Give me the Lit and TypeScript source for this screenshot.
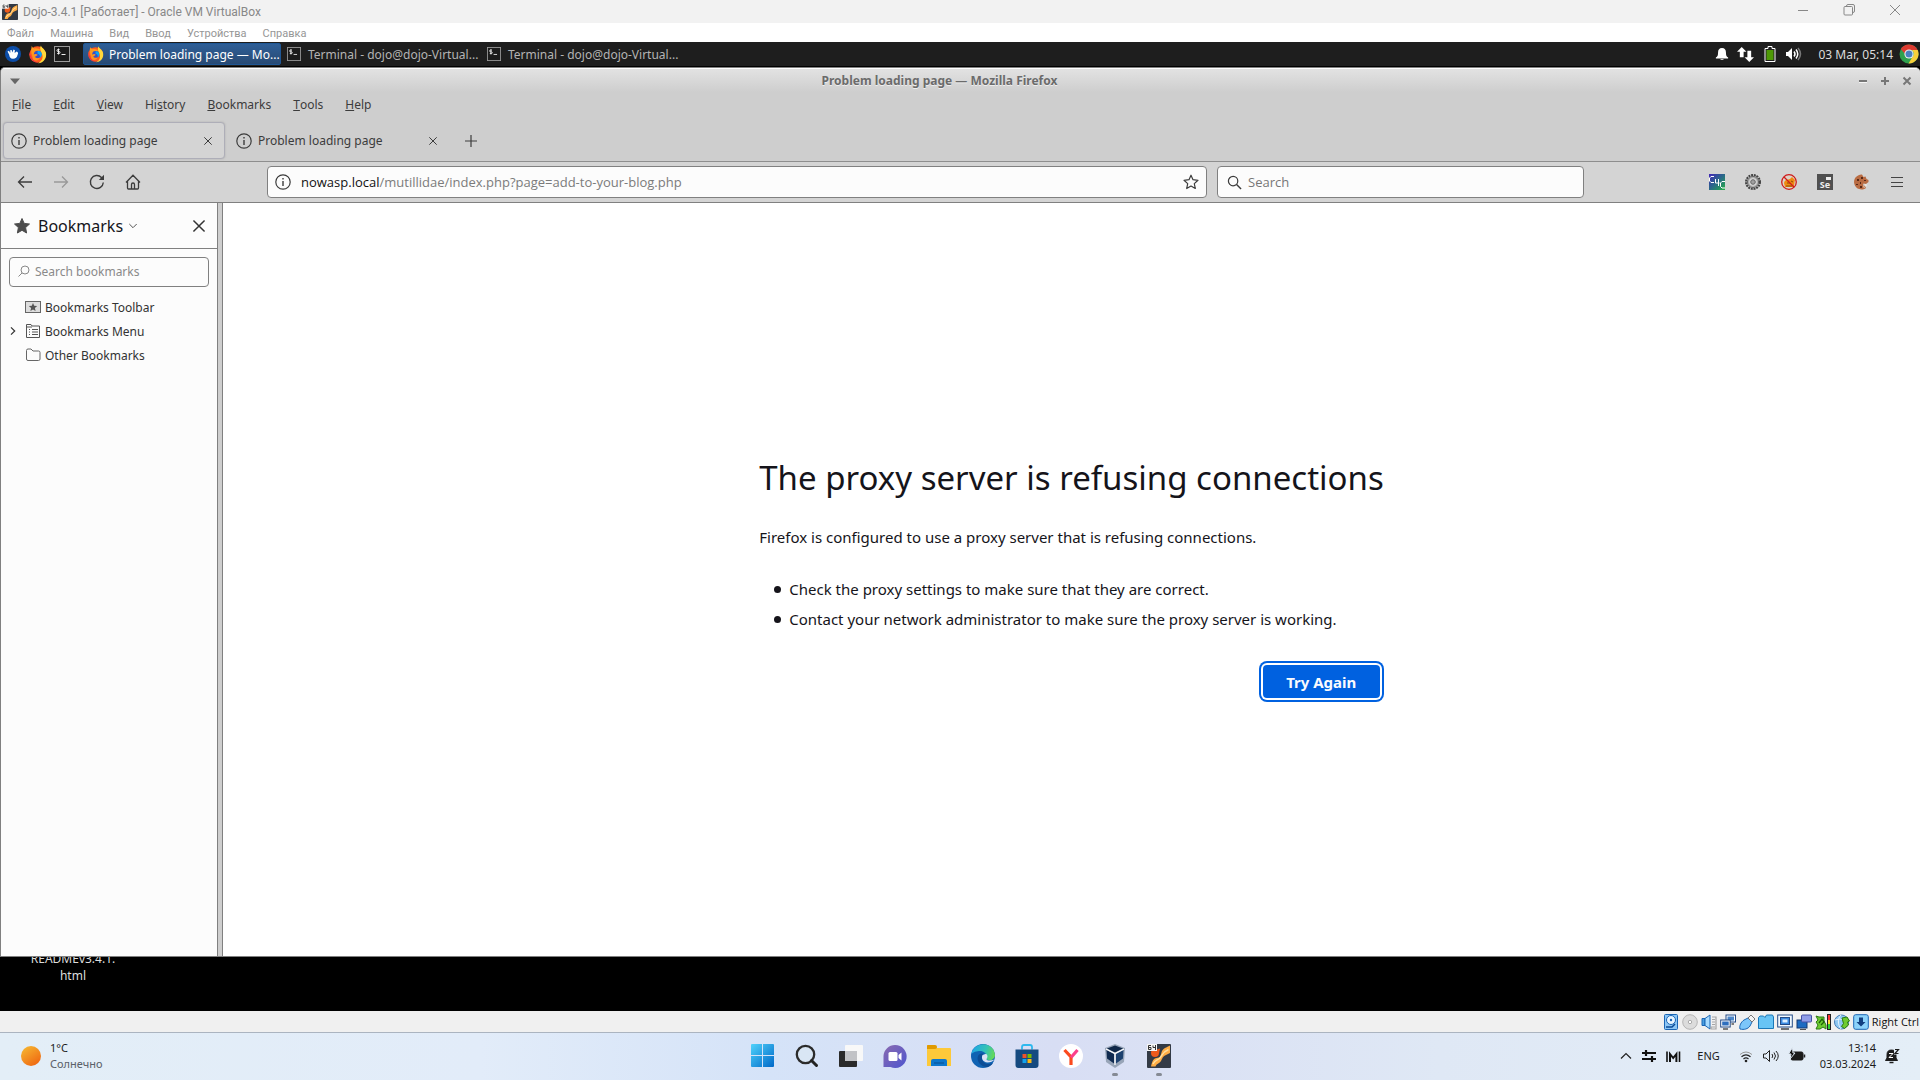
import { LitElement, html, css, svg, nothing } from "lit";
import { customElement, property, state } from "lit/decorators.js";

type Drawing = { box: number; body: unknown };

const strokeInfo = svg`<circle cx="8" cy="8" r="7.200" fill="none" stroke="currentColor" stroke-width="1.200"/><path d="M8 7v5M8 4v1.500" stroke="currentColor" stroke-width="1.400"/>`;

const foxBody = svg`
  <circle cx="12.500" cy="12.500" r="10.800" fill="#ff5a1f"/>
  <path d="M17 0.500c.5 3 5 4.500 6.500 9 1.600 7-2 14-10.500 14.500 5-2 7.500-7 5.500-12C17.500 8 14.500 6 17 .5z" fill="#ffd93b"/>
  <path d="M5 1c.5 2 1.500 3 3.500 3.600C12 4 15 5 17 7.600c-2-.6-3 0-3.600 1C10 8 8.500 9 9 11l3 1.500-4 3C5 14 3 10 5 1z" fill="#ff9a1e"/>
  <circle cx="12.700" cy="12.500" r="5" fill="#3a4fc4"/>
  <path d="M12.500 8.200c2.500-1.200 5.500.6 5.700 3.800.1 2-1 4-2.600 5 .7-3.500-.6-5-3.100-5.500z" fill="#0aa6f5"/>
  <path d="M5 12c1 1 3 .5 4.500 0 1.600-.4 2.700.4 3.300 1.100-1.600.4-2 2.400-4 2.400 1 2 4.700 2.500 7 1-1.300 4.400-6.500 5-9.200 2.500z" fill="#ff9320"/>
  <path d="M2 9c-1 8 5 14.500 12 14.500C8 22.500 3.500 18 2 9z" fill="#e6225b"/>`;

const termBody = svg`
  <rect x=".5" y=".5" width="15" height="15" fill="#1c1c1c" stroke="#9a9a9a"/>
  <path d="M5.500 3.500H4a1 1 0 0 0 0 2h1a1 1 0 0 1 0 2H3.200M4.500 2.500v6M7.500 8.500h4" fill="none" stroke="#eee"/>`;

const vmBody = svg`
  <rect width="24" height="24" rx="1" fill="#333a45"/>
  <path d="M4 22.500c1-5 2.500-8 5.500-8.500 4-.5 4-2 5-5.500C15.500 5 18 4 20 3l3-1.500V9l-4 2c-3 1-3.500 3-5 6-1.500 2.500-4 2-5.500 5.500z" fill="#ffad45"/>
  <path d="M6 20c2-4 5-4 7-6 2.500-3 2.500-6 8.500-8.500" fill="none" stroke="#ffe0a0" stroke-width="1.500"/>
  <circle cx="8" cy="9" r="4" fill="#ee5a1c"/><path d="M9 6l4-1.500-1 5z" fill="#ee5a1c"/>
  <rect x="0" y="0" width="10" height="7" fill="#f5f5f5"/>
  <path d="M4 1.500H1.500v4H4v-2H1.500M6 1.500v2h3M8.500 1v5" fill="none" stroke="#333"/>`;

const drawings: Record<string, Drawing> = {
  info: { box: 16, body: strokeInfo },
  fox: { box: 25, body: foxBody },
  term: { box: 16, body: termBody },
  vm: { box: 24, body: vmBody },
  xfce: { box: 16, body: svg`<circle cx="8" cy="8" r="8" fill="#0c4da8"/><path d="M2.500 5.500l1.500-.8 1.200 2.200L5.400 4h1.300l.5 2.600L8.600 3.600l1.300.6L9.600 7l2-1.500c1.400.4 2 2 1 3.300-.5 2.700-2 4-4.600 4-2.800 0-3.600-1.700-3.800-4z" fill="#fff"/>` },
  chrome: { box: 20, body: svg`<circle cx="10" cy="10" r="9.500" fill="#2fa04e"/><path d="M1.800 5A9.500 9.500 0 0 1 18.600 6H10a4 4 0 0 0-4 4z" fill="#dd3b31"/><path d="M18.700 6A9.500 9.500 0 0 1 9.500 19.500L14 12a4 4 0 0 0-1.500-6z" fill="#f8cf3b"/><circle cx="10" cy="10" r="4.600" fill="#f1f1f1"/><circle cx="10" cy="10" r="3.500" fill="#4a80c0"/>` },
  bell: { box: 16, body: svg`<path d="M8 1c3 0 4.500 2 4.500 5 0 3.500.5 5 2.500 6v1H1v-1c2-1 2.500-2.500 2.500-6C3.500 3 5 1 8 1zM6 14h4c-.3 1.300-3.700 1.300-4 0z" fill="#fff"/>` },
  updown: { box: 18, body: svg`<path d="M5 1l5 5H7v6H3V6H0zM13 17l5-5h-3V5h-4v7H8z" fill="#fff"/>` },
  battery: { box: 16, body: svg`<path d="M6 .5h4v2h3v13H3v-13h3z" fill="#1e1e1e" stroke="#fff"/><rect x="4.500" y="4" width="7" height="10" fill="#4e9a06"/>` },
  volume: { box: 16, body: svg`<path d="M0 6h2l4-4v12l-4-4H0z" fill="#fff"/><path d="M8 5.500q2 2.500 0 5M10 3.500q3.500 4.500 0 9" fill="none" stroke="#fff" stroke-width="1.500"/><path d="M12 2q5 6 0 12" fill="none" stroke="#777" stroke-width="1.500"/>` },
  winmin: { box: 12, body: svg`<path d="M1 6.500h10" stroke="#888"/>` },
  winres: { box: 12, body: svg`<path d="M3.500 3V2a1.500 1.500 0 0 1 1.500-1.500h5A1.500 1.500 0 0 1 11.500 2v5A1.500 1.500 0 0 1 10 8.500H9.500" fill="none" stroke="#888"/><rect x="1" y="2.500" width="8.500" height="8.500" rx="1" fill="none" stroke="#888"/>` },
  winclose: { box: 12, body: svg`<path d="M1 1l10 10M11 1L1 11" stroke="#888"/>` },
  caret: { box: 8, body: svg`<path d="M0 2h8L4 6.500z" fill="#666"/>` },
  fmin: { box: 8, body: svg`<path d="M0 4h8" stroke="#777" stroke-width="2"/><path d="M0 5.500h8" stroke="#f5f5f5"/>` },
  fmax: { box: 8, body: svg`<path d="M0 4h8M4 0v8" stroke="#777" stroke-width="2"/>` },
  fclose: { box: 8, body: svg`<path d="M.5.500l7 7M7.500.500l-7 7" stroke="#777" stroke-width="2"/>` },
  x: { box: 8, body: svg`<path d="M.3.300l7.400 7.400M7.700.300L.3 7.700" stroke="currentColor"/>` },
  plus: { box: 12, body: svg`<path d="M6 0v12M0 6h12" stroke="currentColor" stroke-width="1.200"/>` },
  back: { box: 16, body: svg`<path d="M15 8H1.500M7 2.500L1.500 8 7 13.500" fill="none" stroke="currentColor" stroke-width="1.300"/>` },
  forward: { box: 16, body: svg`<path d="M1 8h13.500M9 2.500L14.500 8 9 13.500" fill="none" stroke="currentColor" stroke-width="1.300"/>` },
  reload: { box: 16, body: svg`<path d="M14.300 8.500A6.500 6.500 0 1 1 12.500 3.500L14 5" fill="none" stroke="currentColor" stroke-width="1.400"/><path d="M15 .8V6H9.800z" fill="currentColor"/>` },
  home: { box: 16, body: svg`<path d="M1 8.500L8 1.200l7 7.300M2.500 7.500V14q0 1 1 1h9q1 0 1-1V7.500M6.500 15v-4.500a1.500 1.500 0 0 1 3 0V15" fill="none" stroke="currentColor" stroke-width="1.300"/>` },
  star: { box: 16, body: svg`<path d="M8 1.200l2 4.500 5 .6-3.700 3.300 1 4.900L8 12l-4.300 2.500 1-4.900L1 6.300l5-.6z" fill="none" stroke="currentColor" stroke-width="1.200" stroke-linejoin="round"/>` },
  starfull: { box: 16, body: svg`<path d="M8 .5l2.200 4.900 5.300.6-3.900 3.600 1 5.400L8 12.300 3.400 15l1-5.400L.5 6l5.300-.6z" fill="#4c4c4c" stroke="#4c4c4c" stroke-linejoin="round"/>` },
  search: { box: 16, body: svg`<circle cx="6.500" cy="6.500" r="5" fill="none" stroke="currentColor" stroke-width="1.300"/><path d="M10.200 10.200L15 15" stroke="currentColor" stroke-width="1.500"/>` },
  searchleft: { box: 12, body: svg`<circle cx="7" cy="5" r="4" fill="none" stroke="currentColor"/><path d="M4 8L.5 11.500" stroke="currentColor"/>` },
  chevdown: { box: 8, body: svg`<path d="M.3 2L4 5.700 7.700 2" fill="none" stroke="currentColor"/>` },
  chevright: { box: 8, body: svg`<path d="M2 .3L5.700 4 2 7.700" fill="none" stroke="currentColor" stroke-width="1.200"/>` },
  toolbarfolder: { box: 16, body: svg`<rect x=".5" y="2.500" width="15" height="11" fill="#ddd" stroke="#666"/><path d="M8 4l1.200 2.700 3 .3-2.300 2 .7 3L8 10.500 5.400 12l.7-3-2.300-2 3-.3z" fill="#555"/>` },
  menufolder: { box: 16, body: svg`<path d="M1.500 14.500v-13H6l1 1.500h7.500v11.500zM4 6.500h1M7 6.500h6M4 9h1M7 9h6M4 11.500h1M7 11.500h6M2 4h5" fill="none" stroke="#555"/>` },
  folder: { box: 16, body: svg`<path d="M1.500 12V3.500a1.500 1.500 0 0 1 1.500-1.500h3l2 2h5.500A1.500 1.500 0 0 1 15 5.500V12a1.500 1.500 0 0 1-1.500 1.500H3A1.500 1.500 0 0 1 1.500 12z" fill="none" stroke="#666"/>` },
  hamburger: { box: 12, body: svg`<path d="M0 1.500h12M0 6.500h12M0 10.500h12" stroke="#444"/>` },
  c4c: { box: 16, body: svg`<defs><linearGradient id="c4" x1="0" y1="0" x2="1" y2="1"><stop offset="0" stop-color="#4226b8"/><stop offset=".5" stop-color="#2a6a88"/><stop offset="1" stop-color="#25b045"/></linearGradient></defs><rect width="16" height="16" fill="url(#c4)"/><path d="M5 2.500H2L.5 4v3L2 8.500h3M6.500 5v4h4M9.500 5v7M16 7.500h-3L11.500 9v3.500L13 14h3" fill="none" stroke="#fff"/>` },
  gear: { box: 16, body: svg`<circle cx="8" cy="8" r="7" fill="none" stroke="#444" stroke-width="2" stroke-dasharray="2 .8"/><circle cx="8" cy="8" r="5.600" fill="#b0b0b0" stroke="#666"/><circle cx="8" cy="8" r="3.800" fill="#dcdcdc"/><circle cx="8" cy="8" r="2.300" fill="#a0a0a0" stroke="#666"/>` },
  foxoff: { box: 16, body: svg`<circle cx="8" cy="8" r="7.300" fill="#ddd3c8"/><path d="M3 9c1-4 4-3 6-4l2-2 3 3c-1 3 0 5-2 7H4z" fill="#ef8a12"/><path d="M6 9h3M10 7l2 1M5 12h6" stroke="#8d4a05"/><circle cx="8" cy="8" r="7.300" fill="none" stroke="#cf1d1d" stroke-width="1.300"/><path d="M3 3l10 10" stroke="#cf1d1d" stroke-width="1.300"/>` },
  cookie: { box: 16, body: svg`<path d="M9 .5A7.500 7.500 0 1 0 13 14l-1-2-2-.5.500-2 2.500.5 2.500-2V6l-2-1-1-2.500-2 .5z" fill="#b96c43"/><path d="M4 5h2v2H4zM8 3h2v2H8zM3 10h2v1H3zM7 12h2v2H7zM7 8h1v2H7zM11 6h2v1h-2z" fill="#5a2a18"/><path d="M11.500 10l2.500.5-1 2.500zM10 12l2 1-1 1z" fill="#f6e9dd"/>` },
  sun: { box: 20, body: svg`<defs><linearGradient id="sg" x1=".1" y1="0" x2=".8" y2="1"><stop offset="0" stop-color="#f6b932"/><stop offset="1" stop-color="#ef6510"/></linearGradient></defs><circle cx="10" cy="10" r="10" fill="url(#sg)"/>` },
  start: { box: 24, body: svg`<defs><linearGradient id="wg" x1="0" y1="0" x2="1" y2="1"><stop offset="0" stop-color="#4fd2fb"/><stop offset="1" stop-color="#0068c8"/></linearGradient></defs><path d="M0 1q0-1 1-1h10v11H0zM12 0h10q1 0 1 1v10H12zM0 12h11v11H1q-1 0-1-1zM12 12h11v10q0 1-1 1H12z" fill="url(#wg)"/>` },
  bigsearch: { box: 24, body: svg`<circle cx="10.500" cy="10.500" r="8.700" fill="#d9e6f4" stroke="#2b2b2b" stroke-width="2.300"/><path d="M16.500 16.500l5 5" stroke="#222" stroke-width="3" stroke-linecap="round"/>` },
  tasks: { box: 24, body: svg`<rect x="0" y="7" width="18" height="16" rx="1" fill="#2a2a2a"/><rect x="6" y="1" width="18" height="16" rx="1" fill="#f8f8f8"/><path d="M6 7h12v10H7q-1 0-1-1z" fill="#c2c3c6"/>` },
  chat: { box: 24, body: svg`<defs><linearGradient id="cg" x1="0" y1="0" x2="1" y2="1"><stop offset="0" stop-color="#8a6ab0"/><stop offset="1" stop-color="#4d55cf"/></linearGradient></defs><path d="M12 1a11.500 11.500 0 1 1-4.500 22H.5V12A11.500 11.500 0 0 1 12 1z" fill="url(#cg)"/><rect x="5.500" y="8" width="9" height="9" rx="1.500" fill="#fff"/><path d="M15.500 11l3-2.500v8l-3-2.500z" fill="#fff"/>` },
  explorer: { box: 24, body: svg`<path d="M0 2q0-1 1-1h7l2 3h13q1 0 1 1v17H0z" fill="#fdc93a"/><path d="M0 2q0-1 1-1h7q2 0 2 2t-2 2H0z" fill="#e09a00"/><path d="M4 22v-5q0-2 2-2h12q2 0 2 2v5z" fill="#0d77cc"/><path d="M7 19h10" stroke="#0b4f8f"/>` },
  edge: { box: 24, body: svg`<defs><linearGradient id="eg" x1="0" y1=".3" x2="1" y2=".5"><stop offset="0" stop-color="#1fa5e6"/><stop offset=".6" stop-color="#35c3b5"/><stop offset="1" stop-color="#66da55"/></linearGradient></defs><circle cx="12" cy="12" r="12" fill="#1063b3"/><path d="M.5 10C2-2 22-4 24 11c0 4-4 6-7 5-2-.5-2.500-1.500-1.500-3C16 9 12 6.500 8 7c-4 .3-7 2-7.500 3z" fill="url(#eg)"/><path d="M7 12c-2 5 3 11 9 11 2 0 5-2 6-4-5 2-10 1-11-4-.5-2 .5-4 2-5-3-1-5 0-6 2z" fill="#0c4d96"/><path d="M11.500 11c-1.500 3 0 7 5 7.500 3 0 5.500-1 7-3-3 1.500-8 1.500-8-.5 2-3 .5-5-1-5z" fill="#dae2f4"/>` },
  store: { box: 24, body: svg`<path d="M7 5.500V3q0-2 2-2h6q2 0 2 2v2.500" fill="none" stroke="#2eb9ee" stroke-width="1.800"/><path d="M.5 5.500h23V21q0 3-3 3h-17q-3 0-3-3z" fill="#154a80"/><path d="M7.500 10h4v4h-4z" fill="#f1512a"/><path d="M12.500 10h4v4h-4z" fill="#7eb900"/><path d="M7.500 15h4v4h-4z" fill="#12a3ec"/><path d="M12.500 15h4v4h-4z" fill="#fdb813"/>` },
  yandex: { box: 24, body: svg`<circle cx="12" cy="12" r="12" fill="#fff"/><path d="M5.500 6L12 13v8" fill="none" stroke="#fb4a1e" stroke-width="3.200"/><path d="M12 13.500L18.500 6" stroke="#fb3f8a" stroke-width="3.200"/>` },
  vbox: { box: 24, body: svg`<path d="M12 0l10 4-1 14-9 6-9-6L2 4z" fill="#98a5b8"/><path d="M12 1.500l8 3-8 4-8-4z" fill="#0f2748"/><path d="M3.500 6l7.500 4v9.500l-7-5z" fill="#102a50"/><path d="M20.500 6L13 10v9.500l7-5z" fill="#1d416f"/><path d="M3 5l9 4.500L21 5M12 9.500V21" fill="none" stroke="#fff" stroke-width="1.200"/>` },
  tchev: { box: 12, body: svg`<path d="M1 8.500l5-5 5 5" fill="none" stroke="#222" stroke-width="1.200"/>` },
  switch: { box: 14, body: svg`<path d="M0 4h14M0 10h14" stroke="#111" stroke-width="2"/><path d="M4 1v6M10 7v6" stroke="#111" stroke-width="2.200"/>` },
  mark: { box: 14, body: svg`<path d="M1 2.500V13M13.500 2.500V13" fill="none" stroke="#111" stroke-width="1.600"/><path d="M4 13V5l3.200 4 3.200-4v8" fill="none" stroke="#111" stroke-width="2"/>` },
  wifi: { box: 14, body: svg`<path d="M1 5.500q6-5 12 0" fill="none" stroke="#999"/><path d="M2.500 7.800q4.500-4 9 0M4.500 10q2.500-2.200 5 0" fill="none" stroke="#222" stroke-width="1.200"/><circle cx="7" cy="12" r="1.300" fill="#222"/>` },
  sound: { box: 16, body: svg`<path d="M.5 6H3l3.500-3.500v11L3 10H.5z" fill="none" stroke="#222"/><path d="M9 6q1.500 2 0 4M11 4.500q3 3.500 0 7M13 3q4.500 5 0 10" fill="none" stroke="#222"/>` },
  power: { box: 16, body: svg`<rect x="2" y="4" width="12" height="8" rx="1.500" fill="#1b1b1b" stroke="#1b1b1b"/><path d="M15.500 6.500v3" stroke="#222" stroke-width="1.500"/><path d="M3.500-.5L-.5 6H2l-1 5 5-6H4z" fill="#111" stroke="#e3edf8"/>` },
  quiet: { box: 16, body: svg`<path d="M1.500 12.500L3 10V6.500Q3 2 7.500 2q4.500 0 4.500 4.500V10l1.500 2.500z" fill="#1c1c1c" stroke="#1c1c1c" stroke-linejoin="round"/><path d="M5 5.500h4l-4 4h4" fill="none" stroke="#fff"/><path d="M10 .5h6v6h-6z" fill="#e4eef7"/><path d="M11 1.500h3.500L11 5.500h3.500" fill="none" stroke="#1c1c1c" stroke-width="1.200"/><path d="M5.500 14.500h4" stroke="#1c1c1c" stroke-width="1.500"/>` },
  dHdd: { box: 16, body: svg`<rect x="1.500" y=".5" width="13" height="15" rx="1" fill="#8cc6f5" stroke="#1b66b5"/><circle cx="8" cy="6" r="4.500" fill="#e8f5ff" stroke="#1b66b5"/><circle cx="8" cy="6" r="1.200" fill="#1b66b5"/><path d="M3 13h6l3-3" fill="none" stroke="#0a4b96" stroke-width="1.500"/>` },
  dCd: { box: 16, body: svg`<circle cx="8" cy="8" r="7.300" fill="#dcdcdc" stroke="#b5b5b5"/><circle cx="8" cy="8" r="1.700" fill="#fff" stroke="#aaa"/>` },
  dAudio: { box: 16, body: svg`<path d="M1 4.500h3v7H1z" fill="#4a9fe0" stroke="#1b66b5"/><path d="M4 4.500L9 1v14l-5-3.500z" fill="#a9dcff" stroke="#1b66b5"/><path d="M11 3h4v12h-5v-2h4M11 5.500h3M11 8h3M11 10.500h3" fill="none" stroke="#a5a5a5" stroke-width="1.200"/>` },
  dNet: { box: 16, body: svg`<rect x="6" y="1" width="9.500" height="7" fill="#fff" stroke="#234a85"/><rect x="7.500" y="2.500" width="6.500" height="4" fill="#4b86c8"/><rect x=".7" y="6" width="9.500" height="7" fill="#fff" stroke="#234a85"/><rect x="2.200" y="7.500" width="6.500" height="4" fill="#2f6fbe"/><path d="M3 15h5M11.500 10h2.500" stroke="#555" stroke-width="1.500"/>` },
  dUsb: { box: 16, body: svg`<path d="M1 15c-1-3 1-7 4-9l4-2 4 4-2 4c-2 3-6 4-10 3z" fill="#7cc6fa" stroke="#1b66b5"/><path d="M9 4l3-3 4 4-3 3z" fill="#f5f5f5" stroke="#777"/>` },
  dFolder: { box: 16, body: svg`<path d="M.5 14.500v-11L2 2h3.500L7 3.500 8.500 1h6l1 2v11.500z" fill="#68c4f5" stroke="#1b78b8"/>` },
  dDisplay: { box: 16, body: svg`<rect x=".7" y="1" width="14.600" height="12" fill="#f3faff" stroke="#234a85"/><rect x="3.500" y="3.500" width="9" height="7" fill="#3b8ae0" stroke="#234a85"/><path d="M5.500 5.500h5v3h-5z" fill="#dff1ff"/><path d="M4 15h8" stroke="#444" stroke-width="1.500"/>` },
  dRecord: { box: 16, body: svg`<rect x="1" y="6" width="10" height="8" fill="#1d6bc1" stroke="#153a70"/><rect x="5.500" y="1" width="10" height="7" rx="1" fill="#8f9ce8" stroke="#4450a5"/><path d="M4 15.500h6" stroke="#555"/>` },
  dCpu: { box: 16, body: svg`<path d="M1 2l3 1h5v4l2 4v4l-3-2-3 2H1l2-4-2-3 2-2z" fill="#6ecb30" stroke="#2a7a10"/><path d="M4 9l3-4 2 3-3 3" fill="none" stroke="#1d5f0a" stroke-width="1.300"/><rect x="12.500" y=".5" width="3" height="15" fill="#32d032" stroke="#222"/><path d="M13 1h2v6h-2z" fill="#f33"/><path d="M13 6h2v4h-2z" fill="#fd3"/>` },
  dMouse: { box: 16, body: svg`<circle cx="7.500" cy="8" r="7" fill="#8fc8f2" stroke="#4a7fb5"/><path d="M7 1c-4 4-3 10 0 14M1 6q5-2 9 0" fill="none" stroke="#e3f3ff"/><path d="M8 4l5-1 2.500 4-2 1 1 3-4 3.500-3-2 2-3z" fill="#6ecb30" stroke="#2a7a10"/>` },
  dKey: { box: 16, body: svg`<rect x=".7" y=".7" width="14.600" height="14.600" rx="2" fill="#8dd3fb" stroke="#1b66b5"/><path d="M6 3.500h4V8h2.500L8 12.500 3.500 8H6z" fill="#123f80"/>` },
};

@customElement("ui-icon")
class UiIcon extends LitElement {
  static styles = css`
    :host { display: inline-flex; flex: none; }
    svg { display: block; overflow: visible; }
  `;
  @property() name = "";
  @property({ type: Number }) size = 16;
  render() {
    const d = drawings[this.name];
    return d
      ? html`<svg width=${this.size} height=${this.size} viewBox="0 0 ${d.box} ${d.box}" aria-hidden="true">${d.body}</svg>`
      : nothing;
  }
}

const icon = (name: string, size = 16) => html`<ui-icon name=${name} size=${size}></ui-icon>`;

const reset = css`
  :host { display: block; box-sizing: border-box; }
  *, *::before, *::after { box-sizing: border-box; }
  button, input {
    font: inherit; color: inherit; background: none; border: 0;
    padding: 0; margin: 0; outline: 0; min-width: 0;
  }
  button { display: inline-flex; align-items: center; justify-content: center; white-space: nowrap; }
  a { color: inherit; text-decoration: none; }
  ul { list-style: none; margin: 0; padding: 0; }
`;

@customElement("host-header")
class HostHeader extends LitElement {
  static styles = [reset, css`
    :host { font-family: Roboto, "Noto Sans", sans-serif; }
    .title { display: flex; align-items: center; height: 23px; padding: 0 19px 0 2px; gap: 5px; background: #f2f2f2; color: #888; font-size: 12px; }
    .name { flex: 1; }
    .controls { display: flex; gap: 34px; padding-bottom: 3px; }
    .menu { display: flex; align-items: center; gap: 16px; height: 19px; padding: 1px 7px 0; background: #fff; color: #969696; font-size: 11px; }
  `];
  render() {
    return html`
      <header class="title">
        ${icon("vm", 16)}<span class="name">Dojo-3.4.1 [Работает] - Oracle VM VirtualBox</span>
        <div class="controls">
          <button aria-label="Свернуть">${icon("winmin", 12)}</button>
          <button aria-label="Окно">${icon("winres", 12)}</button>
          <button aria-label="Закрыть">${icon("winclose", 12)}</button>
        </div>
      </header>
      <nav class="menu">
        ${["Файл", "Машина", "Вид", "Ввод", "Устройства", "Справка"].map((t) => html`<button>${t}</button>`)}
      </nav>`;
  }
}

@customElement("guest-panel")
class GuestPanel extends LitElement {
  static styles = [reset, css`
    .panel { display: flex; align-items: center; height: 25px; padding: 0 1px 0 5px; background: #1e1e1e; border-bottom: 1px solid #000; color: #b4b4b4; font-size: 12px; }
    .launch { display: flex; align-items: center; gap: 7px; width: 78px; }
    .task { width: 198px; height: 22px; justify-content: flex-start; gap: 7px; padding: 0 4px; margin-right: 2px; }
    .active { background: linear-gradient(#2f5f97, #284a74); border: 1px solid #1f5795; border-radius: 2px; color: #fff; padding: 0 3px; gap: 5px; }
    .tray { display: flex; align-items: center; gap: 8px; margin-left: auto; color: #dcdcdc; }
    .clock { margin: 0 -2px 0 8px; }
  `];
  render() {
    return html`
      <div class="panel">
        <div class="launch">
          <button aria-label="Menu">${icon("xfce", 16)}</button>
          <button aria-label="Firefox">${icon("fox", 19)}</button>
          <button aria-label="Terminal">${icon("term", 16)}</button>
        </div>
        <button class="task active">${icon("fox", 17)}Problem loading page — Mo...</button>
        <button class="task">${icon("term", 14)}Terminal - dojo@dojo-Virtual...</button>
        <button class="task">${icon("term", 14)}Terminal - dojo@dojo-Virtual...</button>
        <div class="tray">
          ${icon("bell", 14)}${icon("updown", 17)}${icon("battery", 16)}${icon("volume", 16)}
          <span class="clock">03 Mar, 05:14</span>${icon("chrome", 20)}
        </div>
      </div>`;
  }
}

@customElement("browser-chrome")
class BrowserChrome extends LitElement {
  static styles = [reset, css`
    :host { color: #3c3c3c; font-size: 12px; }
    .title { display: flex; align-items: center; height: 24px; padding: 0 9px; border-top: 1px solid #fff; background: linear-gradient(#e2e2e2, #cecece); }
    .name { flex: 1; text-align: center; font-weight: 700; color: #6b6b6b; text-shadow: 0 1px #eee; }
    .controls { display: flex; gap: 14px; }
    .menu { display: flex; align-items: center; gap: 22px; height: 24px; padding: 0 11px; }
    .tabs { display: flex; align-items: center; height: 46px; padding: 4px 2px 0; border-bottom: 1px solid #8e8e8e; }
    .tab { display: flex; align-items: center; gap: 6px; width: 222px; height: 37px; margin-right: 3px; padding: 0 12px 0 7px; border: 1px solid transparent; border-radius: 4px; }
    .selected { background: #d4d4d4; border-color: #aeaeb8; box-shadow: 0 0 2px #aaa; }
    .label { flex: 1; text-align: left; justify-content: flex-start; }
    .new { width: 40px; margin-left: -2px; }
    .nav { display: grid; grid-template-columns: 260px minmax(0, 940fr) minmax(0, 377fr) 336px; align-items: center; height: 41px; padding-left: 6px; background: #d4d4d4; border-bottom: 1px solid #808080; }
    .buttons { display: flex; }
    .buttons button { width: 36px; height: 32px; }
    .off { color: #999; }
    .field { display: flex; align-items: center; height: 32px; gap: 10px; padding: 0 7px; background: #fcfcfc; border: 1px solid #808080; border-radius: 4px; font: 13px "Open Sans", "Noto Sans", sans-serif; }
    .field + .field { margin-left: 10px; gap: 6px; padding-left: 9px; }
    .url { flex: 1; display: flex; color: #7b7b7b; }
    .url b { font-weight: 400; color: #111; }
    input { flex: 1; }
    input::placeholder { color: #777; opacity: 1; }
    .addons { display: flex; justify-content: flex-end; align-items: center; gap: 20px; padding-right: 15px; }
    .se { width: 16px; height: 16px; padding-top: 4px; background: linear-gradient(#eee, #eee) 9px 3px / 5px 3px no-repeat #505050; color: #eee; font-size: 9px; font-weight: 700; }
    .menubtn { padding: 0 2px; }
  `];
  @state() selected = 0;
  render() {
    const menus = [["", "F", "ile"], ["", "E", "dit"], ["", "V", "iew"], ["Hi", "s", "tory"], ["", "B", "ookmarks"], ["", "T", "ools"], ["", "H", "elp"]];
    return html`
      <header class="title">
        <button aria-label="Window menu">${icon("caret", 10)}</button>
        <span class="name">Problem loading page — Mozilla Firefox</span>
        <div class="controls">
          <button aria-label="Minimize">${icon("fmin", 8)}</button>
          <button aria-label="Maximize">${icon("fmax", 8)}</button>
          <button aria-label="Close">${icon("fclose", 8)}</button>
        </div>
      </header>
      <nav class="menu">${menus.map(([a, b, c]) => html`<button>${a}<u>${b}</u>${c}</button>`)}</nav>
      <div class="tabs">
        ${[0, 1].map((i) => html`
          <div class="tab ${i === this.selected ? "selected" : ""}">
            ${icon("info", 16)}
            <button class="label" @click=${() => (this.selected = i)}>Problem loading page</button>
            <button aria-label="Close tab">${icon("x", 8)}</button>
          </div>`)}
        <button class="new" aria-label="New tab">${icon("plus", 12)}</button>
      </div>
      <div class="nav">
        <div class="buttons">
          <button aria-label="Back">${icon("back")}</button>
          <button class="off" aria-label="Forward">${icon("forward")}</button>
          <button aria-label="Reload">${icon("reload")}</button>
          <button aria-label="Home">${icon("home")}</button>
        </div>
        <div class="field">
          ${icon("info")}
          <a class="url" href="#"><b>nowasp.local</b>/mutillidae/index.php?page=add-to-your-blog.php</a>
          <button aria-label="Bookmark this page">${icon("star")}</button>
        </div>
        <div class="field">${icon("search", 15)}<input aria-label="Search" placeholder="Search"></div>
        <div class="addons">
          <button aria-label="Cookie codec">${icon("c4c")}</button>
          <button aria-label="Settings">${icon("gear")}</button>
          <button aria-label="Proxy off">${icon("foxoff")}</button>
          <button class="se">Se</button>
          <button aria-label="Cookies">${icon("cookie")}</button>
          <button class="menubtn" aria-label="Application menu">${icon("hamburger", 12)}</button>
        </div>
      </div>`;
  }
}

@customElement("bookmarks-bar")
class BookmarksBar extends LitElement {
  static styles = [reset, css`
    :host { width: 216px; flex: none; background: #fcfcfc; color: #333; font-size: 12px; }
    .head { display: flex; align-items: center; height: 46px; padding: 0 12px 0 13px; border-bottom: 1px solid #808080; }
    .pick { gap: 8px; font-size: 16px; color: #15141a; margin-right: auto; }
    .small { color: #555; display: inline-flex; margin-left: -2px; }
    .search { display: flex; align-items: center; gap: 5px; height: 30px; margin: 8px; padding: 0 8px 2px; border: 1px solid #808080; border-radius: 4px; color: #888; }
    input { flex: 1; }
    input::placeholder { color: #8a8a8a; opacity: 1; }
    li { display: flex; align-items: center; gap: 4px; height: 24px; padding-left: 8px; }
    .twist { width: 12px; display: inline-flex; }
  `];
  render() {
    const rows = [["toolbarfolder", "Bookmarks Toolbar", false], ["menufolder", "Bookmarks Menu", true], ["folder", "Other Bookmarks", false]] as const;
    return html`
      <div class="head">
        <button class="pick">${icon("starfull")}Bookmarks<span class="small">${icon("chevdown", 8)}</span></button>
        <button aria-label="Close sidebar">${icon("x", 12)}</button>
      </div>
      <label class="search">${icon("searchleft", 12)}<input aria-label="Search bookmarks" placeholder="Search bookmarks"></label>
      <ul>
        ${rows.map(([i, t, open]) => html`<li><span class="twist">${open ? icon("chevright", 8) : nothing}</span>${icon(i)}<a href="#">${t}</a></li>`)}
      </ul>`;
  }
}

@customElement("error-page")
class ErrorPage extends LitElement {
  static styles = [reset, css`
    :host { flex: 1; display: flex; align-items: center; justify-content: center; background: #fff; color: #15141a; font-size: 15px; }
    .box { display: flex; flex-direction: column; }
    h1 { margin: 0; font-size: 33px; line-height: 40px; font-weight: 400; }
    p { margin: 27px 0 28px; line-height: 24px; }
    ul { padding-left: 15px; }
    li { display: flex; align-items: center; gap: 8px; line-height: 24px; margin-bottom: 6px; }
    li::before { content: ""; width: 7px; height: 7px; border-radius: 50%; background: #15141a; }
    .retry { align-self: flex-end; height: 33px; min-width: 117px; margin: 28px 4px 3px; border-radius: 4px; background: #0061e0; color: #fbfbfe; font-weight: 700; box-shadow: 0 0 0 2px #fff, 0 0 0 4px #0061e0; }
  `];
  render() {
    return html`
      <main class="box">
        <h1>The proxy server is refusing connections</h1>
        <p>Firefox is configured to use a proxy server that is refusing connections.</p>
        <ul>
          <li>Check the proxy settings to make sure that they are correct.</li>
          <li>Contact your network administrator to make sure the proxy server is working.</li>
        </ul>
        <button class="retry">Try Again</button>
      </main>`;
  }
}

@customElement("host-footer")
class HostFooter extends LitElement {
  static styles = [reset, css`
    .status { display: flex; align-items: center; justify-content: flex-end; gap: 3px; height: 21px; padding-right: 1px; background: #f0f0f0; color: #111; font: 11px "Open Sans", "Noto Sans", sans-serif; }
    .taskbar { display: grid; grid-template-columns: 1fr auto 1fr; align-items: center; height: 48px; padding-bottom: 2px; border-top: 1px solid #abb4c0; background: linear-gradient(90deg, #e3eef7, #e2ecf9 25%, #d5e3f8 40%, #d8def4 55%, #dfe8f5 75%, #e4eef7); color: #1c1c1c; font-size: 11px; }
    .weather { justify-self: start; gap: 9px; padding-left: 21px; text-align: left; line-height: 16px; }
    .muted { display: block; color: #5a6068; }
    .apps { display: flex; gap: 20px; padding-left: 1px; }
    .app { width: 24px; height: 44px; position: relative; }
    .run::after { content: ""; position: absolute; bottom: 2px; left: 9px; width: 6px; height: 3px; border-radius: 2px; background: #858a94; }
    .tray { display: flex; align-items: center; justify-content: flex-end; gap: 10px; padding-right: 20px; }
    .lang { margin: 0 9px 0 7px; }
    .time { text-align: right; line-height: 16px; margin: 0 -2px 0 5px; }
  `];
  render() {
    const devices = ["dHdd", "dCd", "dAudio", "dNet", "dUsb", "dFolder", "dDisplay", "dRecord", "dCpu", "dMouse", "dKey"];
    const apps = [["start", "Пуск"], ["bigsearch", "Поиск"], ["tasks", "Задачи"], ["chat", "Чат"], ["explorer", "Проводник"], ["edge", "Edge"], ["store", "Store"], ["yandex", "Яндекс"], ["vbox", "VirtualBox"], ["vm", "Dojo"]];
    return html`
      <div class="status">${devices.map((d) => icon(d, 16))}<span>Right Ctrl</span></div>
      <footer class="taskbar">
        <button class="weather">${icon("sun", 20)}<span>1°C<span class="muted">Солнечно</span></span></button>
        <div class="apps">
          ${apps.map(([i, t], n) => html`<button class="app ${n > 7 ? "run" : ""}" aria-label=${t}>${icon(i, 24)}</button>`)}
        </div>
        <div class="tray">
          ${icon("tchev", 12)}${icon("switch", 14)}${icon("mark", 14)}
          <span class="lang">ENG</span>
          ${icon("wifi", 14)}${icon("sound", 16)}${icon("power", 16)}
          <span class="time">13:14<br>03.03.2024</span>${icon("quiet", 16)}
        </div>
      </footer>`;
  }
}

@customElement("app-root")
class AppRoot extends LitElement {
  static styles = [reset, css`
    :host { display: flex; flex-direction: column; height: 100vh; overflow: hidden; background: #000; font-family: "Noto Sans", "Open Sans", sans-serif; }
    .window { flex: 1; display: flex; flex-direction: column; min-height: 0; background: #cecece; border: 1px solid #808080; border-right: 0; border-radius: 5px 5px 0 0; overflow: hidden; }
    .content { flex: 1; display: flex; min-height: 0; }
    .splitter { flex: none; width: 6px; background: #cecece; border: solid #808080; border-width: 0 1px; }
    .desktop { height: 54px; overflow: hidden; color: #ddd; font-size: 12px; line-height: 17px; }
    .file { width: 146px; margin-top: -7px; text-align: center; }
  `];
  render() {
    return html`
      <host-header></host-header>
      <guest-panel></guest-panel>
      <section class="window">
        <browser-chrome></browser-chrome>
        <div class="content"><bookmarks-bar></bookmarks-bar><div class="splitter"></div><error-page></error-page></div>
      </section>
      <div class="desktop"><div class="file">READMEv3.4.1.<br>html</div></div>
      <host-footer></host-footer>`;
  }
}
